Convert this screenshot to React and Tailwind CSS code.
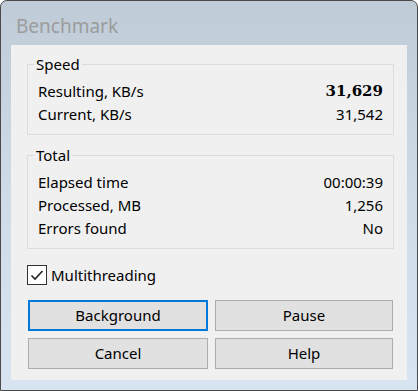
import React, { useState } from "react";

const Row = ({ label, value, bold }) => (
  <div className="flex h-[23px] items-center justify-between">
    <span>{label}</span>
    <span
      className={
        bold ? "font-bold font-['DejaVu_Serif',serif] text-[15px]" : ""
      }
    >
      {value}
    </span>
  </div>
);

const Group = ({ title, children, className }) => (
  <div
    className={`relative ml-[16px] w-[367px] border border-[#dcdcdc] pt-[15px] pb-[8px] pl-[10px] pr-[10px] ${className}`}
  >
    <span className="absolute left-[6px] -top-[12px] bg-[#f0f0f0] px-[2px]">
      {title}
    </span>
    {children}
  </div>
);

const Button = ({ children, focused }) => (
  <button
    className={`h-[31px] flex items-center justify-center bg-[#e1e1e1] pb-[1px] ${
      focused ? "border-2 border-[#0078d7]" : "border border-[#adadad]"
    }`}
  >
    {children}
  </button>
);

export default function App() {
  const [multi, setMulti] = useState(true);

  return (
    <div className="w-[418px] h-[391px] flex flex-col rounded-t-[7px] border border-[#4a4a4a] bg-gradient-to-b from-[#bfcbd7] via-[#cfdbe7] to-[#d8e4f1] font-['Noto_Sans',sans-serif] text-[15px] text-black">
      {/* Barra de título */}
      <div className="h-[44px] shrink-0 pl-[15px] pt-[14px] text-[19px] leading-[22px] text-[#9c9c9c]">
        Benchmark
      </div>

      {/* Área do cliente */}
      <div className="mx-[10px] h-[335px] bg-[#f0f0f0] pt-[19px]">
        <Group title="Speed">
          <Row label="Resulting, KB/s" value="31,629" bold />
          <Row label="Current, KB/s" value="31,542" />
        </Group>

        <Group title="Total" className="mt-[20px]">
          <Row label="Elapsed time" value="00:00:39" />
          <Row label="Processed, MB" value="1,256" />
          <Row label="Errors found" value="No" />
        </Group>

        <label className="mt-[16px] ml-[16px] flex h-[20px] items-center gap-[4px]">
          <span
            className="flex h-[20px] w-[20px] items-center justify-center border border-[#333333] bg-white"
            onClick={() => setMulti(!multi)}
          >
            {multi && (
              <svg width="16" height="16" viewBox="0 0 16 16">
                <path
                  d="M2.5 8.5 L6 12 L13.5 4"
                  fill="none"
                  stroke="#222"
                  strokeWidth="1.6"
                />
              </svg>
            )}
          </span>
          <span>Multithreading</span>
        </label>

        <div className="mt-[15px] ml-[17px] grid w-[365px] grid-cols-[180px_178px] gap-x-[7px] gap-y-[7px]">
          <Button focused>Background</Button>
          <Button>Pause</Button>
          <Button>Cancel</Button>
          <Button>Help</Button>
        </div>
      </div>
    </div>
  );
}
